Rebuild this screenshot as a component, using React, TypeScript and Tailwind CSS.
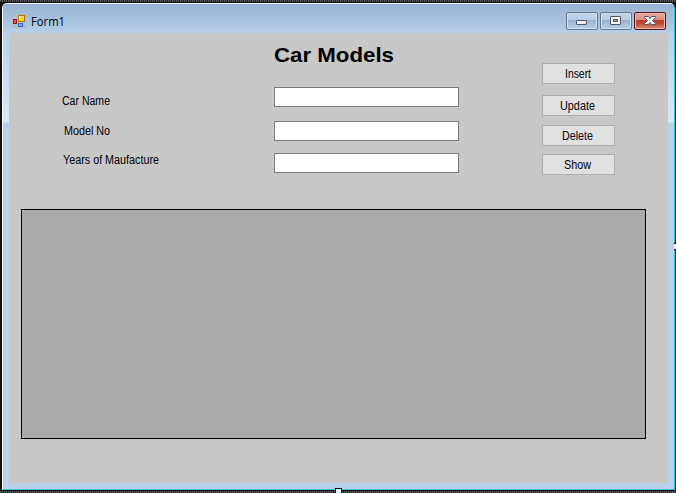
import React from "react";

const labels = [
  { text: "Car Name", box: "ml-[2px] mt-[61px]", width: 48 },
  { text: "Model No", box: "ml-[4px] mt-[16px]", width: 46 },
  { text: "Years of Maufacture", box: "ml-[3px] mt-[15px]", width: 96 },
];

const buttons = [
  { text: "Insert", margin: "mt-[30px]", width: 26 },
  { text: "Update", margin: "mt-[11px]", width: 35 },
  { text: "Delete", margin: "mt-[9px]", width: 31 },
  { text: "Show", margin: "mt-[8px]", width: 27 },
];

function Fitted({ text, width }: { text: string; width: number }) {
  return (
    <svg className="block h-[14px] overflow-visible" style={{ width }}>
      <text
        x="0"
        y="11"
        textLength={width}
        lengthAdjust="spacingAndGlyphs"
        className="font-['Liberation_Sans',sans-serif] text-[12px]"
        fill="#000008"
      >
        {text}
      </text>
    </svg>
  );
}

function CaptionButton({ kind }: { kind: "min" | "max" | "close" }) {
  const tone =
    kind === "close"
      ? "border-[#51171d] bg-[linear-gradient(#e8aca2_0%,#d78b7d_45%,#b93e29_46%,#bd4933_65%,#d9917a_100%)] shadow-[inset_0_0_0_1px_#e9b3a7]"
      : "border-[#64788f] bg-[linear-gradient(#c3d6ea_0%,#b7cde4_45%,#97b3cf_46%,#a2bdd8_65%,#b8d2eb_100%)] shadow-[inset_0_0_0_1px_#d0e1f3]";
  return (
    <button className={`h-[18px] w-8 rounded-[2px] border ${tone}`}>
      <svg width="30" height="16" viewBox="0 0 30 16" className="block">
        {kind === "min" && (
          <rect x="9.5" y="7.5" width="10" height="4" rx="0.5" fill="#f4f4f4" stroke="#535666" />
        )}
        {kind === "max" && (
          <>
            <rect x="9.5" y="3.5" width="10" height="8" rx="0.5" fill="#f4f4f4" stroke="#535666" />
            <rect x="12.5" y="6.5" width="4" height="2" fill="#8fb0d7" stroke="#535666" />
          </>
        )}
        {kind === "close" && (
          <path
            d="M9.5 3.5h4l1.5 2 1.5-2h4v1l-3 3 3 3v1h-4l-1.5-2-1.5 2h-4v-1l3-3-3-3z"
            fill="#f4f4f4"
            stroke="#535666"
          />
        )}
      </svg>
    </button>
  );
}

function FormIcon() {
  return (
    <svg width="14" height="14" viewBox="0 0 14 14" className="block">
      <rect x="0.5" y="0.5" width="13" height="13" fill="#b4bfcc" stroke="#b0b8c3" />
      <rect x="6.5" y="1.5" width="6" height="6" fill="#f9cf3c" stroke="#a87808" />
      <path d="M7 2h5v1H8v3H7z" fill="#ffeb9b" />
      <rect x="1.5" y="5.5" width="3" height="4" fill="#dc594d" stroke="#9d1613" />
      <rect x="6.5" y="9.5" width="4" height="3" fill="#72a8f2" stroke="#3267c2" />
    </svg>
  );
}

export default function App() {
  return (
    <div className="relative h-[493px] w-[676px] overflow-hidden bg-[#101010] pl-[2px] pt-[3px]">
      <div className="absolute left-0 top-0 h-[2px] w-full bg-[repeating-linear-gradient(90deg,#5c5c5c_0_1px,#222_1px_2px)]" />
      <div className="absolute bottom-0 left-0 h-[2px] w-full bg-[repeating-linear-gradient(90deg,#5c5c5c_0_1px,#222_1px_2px)]" />

      <div className="flex h-[487px] w-[673px] flex-col rounded-t-[5px] border border-b-[#38bfd5] border-l-[#f7fbff] border-r-[#27c9e5] border-t-[#edfafa] bg-[linear-gradient(#9ab5d2_0px,#a9c4e1_18px,#b9d1ea_30px,#dbe8f6_118px,#b9d1ea_119px)]">
        <header className="flex h-[29px] shrink-0 items-start pl-[9px] pr-[8px]">
          <div className="mt-[10px]">
            <FormIcon />
          </div>
          <svg className="ml-[5px] mt-[9px] block h-[18px] w-[34px] overflow-visible">
            <text
              x="0"
              y="13"
              textLength="34"
              lengthAdjust="spacingAndGlyphs"
              className="font-['Open_Sans',sans-serif] text-[12px]"
              fill="#000000"
            >
              Form1
            </text>
          </svg>
          <div className="ml-auto mt-[8px] flex gap-[2px]">
            <CaptionButton kind="min" />
            <CaptionButton kind="max" />
            <CaptionButton kind="close" />
          </div>
        </header>

        <main className="ml-[6px] h-[450px] w-[659px] bg-[#c8c8c8]">
          <div className="flex h-[176px]">
            <div className="ml-[51px] flex w-[214px] flex-col">
              {labels.map((l) => (
                <label key={l.text} className={l.box}>
                  <Fitted text={l.text} width={l.width} />
                </label>
              ))}
            </div>
            <div className="flex w-[268px] flex-col">
              <h1 className="mt-[8px] h-[26px]">
                <svg className="block h-[26px] w-[120px] overflow-visible">
                  <text
                    x="0"
                    y="21"
                    textLength="120"
                    lengthAdjust="spacingAndGlyphs"
                    className="font-['Liberation_Sans',sans-serif] text-[21px] font-bold"
                  >
                    Car Models
                  </text>
                </svg>
              </h1>
              <input className="mt-[20px] h-5 w-[185px] border border-[#7a7a7a] bg-white" />
              <input className="mt-[14px] h-5 w-[185px] border border-[#7a7a7a] bg-white" />
              <input className="mt-[12px] h-5 w-[185px] border border-[#7a7a7a] bg-white" />
            </div>
            <div className="flex w-[73px] flex-col">
              {buttons.map((b) => (
                <button
                  key={b.text}
                  className={`flex h-[21px] w-[73px] items-center justify-center border border-[#adadad] bg-[#e1e1e1] pr-[2px] ${b.margin}`}
                >
                  <Fitted text={b.text} width={b.width} />
                </button>
              ))}
            </div>
          </div>
          <div className="ml-3 h-[230px] w-[625px] border border-black bg-[#ababab]" />
        </main>
      </div>

      <div className="absolute left-[335px] top-[488px] h-[7px] w-[7px] border border-black bg-white" />
      <div className="absolute left-[674px] top-[243px] h-[7px] w-[5px] border-y border-black bg-white" />
    </div>
  );
}
